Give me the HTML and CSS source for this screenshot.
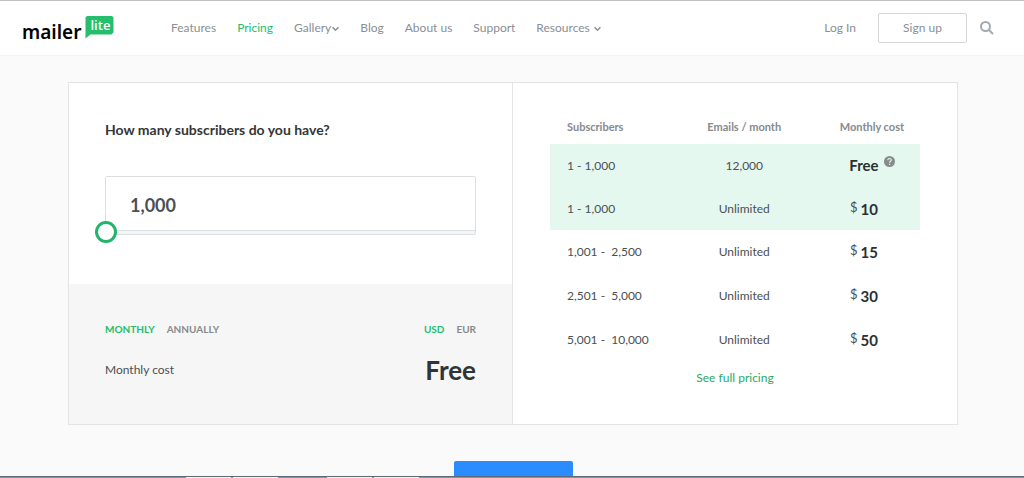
FILE: index.html
```html
<!DOCTYPE html>
<html lang="en">
<head>
<meta charset="utf-8">
<title>Pricing - MailerLite</title>
<link rel="stylesheet" href="styles.css">
</head>
<body>
<header class="header">
  <a class="logo" href="#"><span class="logo-name">mailer</span><span class="logo-bubble">lite</span></a>
  <nav class="nav">
    <a href="#">Features</a>
    <a class="active" href="#">Pricing</a>
    <a href="#">Gallery<svg class="chevron tight" viewBox="0 0 6 5"><path d="M.5 1L3 3.500l2.500-2.500"/></svg></a>
    <a href="#">Blog</a>
    <a href="#">About us</a>
    <a href="#">Support</a>
    <a href="#">Resources<svg class="chevron" viewBox="0 0 6 5"><path d="M.5 1L3 3.500l2.500-2.500"/></svg></a>
  </nav>
  <div class="account">
    <a class="login" href="#">Log In</a>
    <a class="signup" href="#">Sign up</a>
    <button class="search" type="button" aria-label="Search"><svg viewBox="0 0 14 14"><circle cx="5.5" cy="5.5" r="4.5"/><path d="M9 9l4 4"/></svg></button>
  </div>
</header>
<main class="main">
  <section class="card">
    <div class="calculator">
      <div class="subscribers">
        <label class="question" for="count">How many subscribers do you have?</label>
        <div class="amount"><input class="count" id="count" type="text" value="1,000"></div>
        <input class="slider" type="range" min="0" max="100" value="0" aria-label="Subscribers">
      </div>
      <div class="summary">
        <div class="line">
          <div class="switch"><button class="on" type="button">MONTHLY</button><button type="button">ANNUALLY</button></div>
          <div class="switch"><button class="on" type="button">USD</button><button type="button">EUR</button></div>
        </div>
        <div class="line total"><span>Monthly cost</span><strong>Free</strong></div>
      </div>
    </div>
    <div class="plans">
      <table class="prices">
        <thead><tr><th class="range">Subscribers</th><th class="emails">Emails / month</th><th class="cost">Monthly cost</th></tr></thead>
        <tbody>
          <tr class="highlight"><td>1 - 1,000</td><td>12,000</td><td class="free"><b>Free</b><svg class="help" viewBox="0 0 11 11"><circle cx="5.5" cy="5.5" r="5.5"/><path d="M3.8 4.3c0-2.4 3.5-2.3 3.5-.2 0 1.2-1.7 1.2-1.7 2.6M5.6 7.7v1.2"/></svg></td></tr>
          <tr class="highlight"><td>1 - 1,000</td><td>Unlimited</td><td class="price"><span>$</span> <b>10</b></td></tr>
          <tr><td>1,001 - &nbsp;2,500</td><td>Unlimited</td><td class="price"><span>$</span> <b>15</b></td></tr>
          <tr><td>2,501 - &nbsp;5,000</td><td>Unlimited</td><td class="price"><span>$</span> <b>30</b></td></tr>
          <tr><td>5,001 - &nbsp;10,000</td><td>Unlimited</td><td class="price"><span>$</span> <b>50</b></td></tr>
        </tbody>
      </table>
      <a class="full" href="#">See full pricing</a>
    </div>
  </section>
  <button class="cta" type="button" aria-label="Continue"></button>
</main>
<footer class="taskbar"><i></i><i></i><i class="apart"></i><i></i></footer>
</body>
</html>
```
FILE: styles.css
```css
* { box-sizing: border-box; }
body {
  margin: 0;
  height: 100vh;
  display: flex;
  flex-direction: column;
  overflow: hidden;
  background: #fafafa;
  color: #4b4f52;
  font: 12px/20px Lato, "Open Sans", sans-serif;
}
a { color: inherit; text-decoration: none; }
button, input { font: inherit; color: inherit; margin: 0; padding: 0; border: 0; background: none; }
svg { fill: none; stroke: currentColor; }

.header {
  flex: none;
  display: flex;
  align-items: center;
  height: 56px;
  padding: 0 30px 0 22px;
  border-top: 1px solid #c0c0c0;
  border-bottom: 1px solid #f3f3f3;
  background: #fff;
  color: #8a8f92;
}
.logo { display: flex; align-items: flex-start; gap: 4px; width: 149px; }
.logo-name { padding-top: 7px; color: #000; font: 600 19px/24px "Noto Sans", sans-serif; }
.logo-bubble {
  height: 23px;
  margin-top: 3px;
  padding: 0 5px 4px;
  background: #24be6c;
  clip-path: polygon(0 2px, 2px 0, 26px 0, 28px 2px, 28px 17px, 26px 19px, 5px 19px, 0 23px);
  color: #fff;
  font: 600 13px/19px "Open Sans", sans-serif;
}
.nav { display: flex; gap: 21px; }
.nav .active { color: #24be6c; }
.chevron { width: 7px; height: 6px; margin-left: 4px; vertical-align: 0; stroke-width: 1.3; }
.chevron.tight { margin-left: 1px; }
.account { display: flex; align-items: center; margin-left: auto; }
.signup {
  width: 89px;
  margin: 0 13px 0 22px;
  border: 1px solid #d3d5d7;
  border-radius: 2px;
  line-height: 28px;
  text-align: center;
}
.search { width: 14px; height: 14px; color: #a3a9ae; }
.search svg { display: block; stroke-width: 2; }

.main { flex: 1; min-height: 0; padding: 26px 66px 0 68px; overflow: hidden; }
.card {
  display: grid;
  grid-template-columns: 1fr 1fr;
  border: 1px solid #e3e4e5;
  background: #fff;
}
.calculator { display: flex; flex-direction: column; border-right: 1px solid #e3e4e5; }
.subscribers { padding: 37px 36px 41px; }
.question { display: block; margin-bottom: 36px; font-size: 14px; font-weight: 700; color: #333639; }
.amount { padding-bottom: 3px; border: 1px solid #dcdfe2; border-radius: 2px; background: #f3f5f6; }
.count {
  display: block;
  width: 100%;
  height: 54px;
  padding: 2px 24px 0;
  border-bottom: 1px solid #dcdfe2;
  background: #fff;
  color: #4b4f56;
  font-size: 18px;
  font-weight: 700;
}
.slider {
  -webkit-appearance: none;
  appearance: none;
  display: block;
  position: relative;
  width: calc(100% + 20px);
  height: 22px;
  margin: -14px -10px 0;
}
.slider::-webkit-slider-thumb {
  -webkit-appearance: none;
  width: 22px;
  height: 22px;
  border: 3px solid #20b56a;
  border-radius: 50%;
  background: #fff;
}
.summary { flex: 1; padding: 35px 36px 0; background: #f6f6f6; }
.line { display: flex; justify-content: space-between; align-items: center; }
.switch { display: flex; gap: 12px; color: #868a8d; font-size: 10px; font-weight: 700; }
.switch .on { color: #24be6c; }
.total { margin-top: 15px; line-height: 32px; }
.total strong { color: #303438; font-size: 26px; }

.plans { padding: 34px 37px 36px; text-align: center; }
.prices { width: 100%; table-layout: fixed; border-collapse: collapse; }
.prices th { height: 27px; padding: 0 0 7px; color: #868a8d; font-size: 11px; }
.prices td { height: 44px; padding: 0; }
.prices .highlight td { height: 43px; background: #e5f8ef; }
.prices .range { width: 31%; }
.prices .cost { width: 26%; }
.prices th:first-child, .prices td:first-child { padding-left: 17px; text-align: left; white-space: nowrap; }
.prices b { color: #2c3033; font-size: 15px; }
.prices .price { padding-right: 16px; }
.price span { font-size: 13px; vertical-align: 3px; }
.help { width: 11px; height: 11px; margin-left: 5px; vertical-align: 4px; }
.help circle { fill: #858b8a; stroke: none; }
.help path { stroke: #e5f8ef; stroke-width: 1.2; }
.full { display: inline-block; margin-top: 6px; color: #24ad66; }
.cta { display: block; width: 119px; height: 44px; margin: 36px auto 0; border-radius: 2px; background: #2b8cff; }

.taskbar {
  flex: none;
  display: flex;
  gap: 2px;
  height: 2px;
  padding-left: 186px;
  border-top: 1px solid #5f6973;
  background: #8796a4;
}
.taskbar i { width: 45px; background: #f4f4f4; }
.taskbar .apart { margin-left: 47px; }
```
